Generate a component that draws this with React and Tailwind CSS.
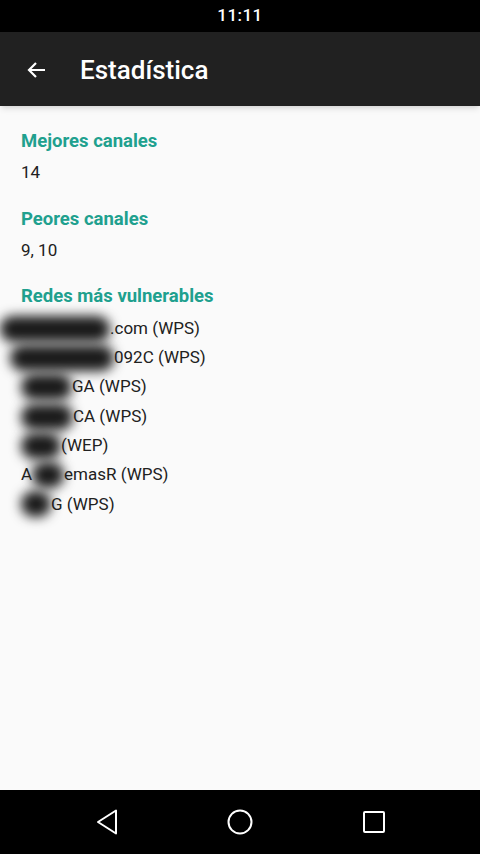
import React from 'react';

const font = { fontFamily: 'Roboto, "Noto Sans", sans-serif' };

const redes = [
  { blob: 'ml-[-21px] w-[110px]', shown: '.com (WPS)' },
  { blob: 'ml-[-11px] w-[104px]', shown: '092C (WPS)' },
  { blob: 'w-[51px]', shown: 'GA (WPS)' },
  { blob: 'w-[52px]', shown: 'CA (WPS)' },
  { blob: 'w-[40px]', shown: '(WEP)' },
  { pre: 'A', blob: 'w-[32px]', shown: 'emasR (WPS)' },
  { blob: 'w-[30px]', shown: 'G (WPS)' },
];

const Seccion = ({ title, children }) => (
  <div className="mb-[19.5px]">
    <h2 className="text-[18.5px] font-bold text-[#20a08e] leading-[24px]">{title}</h2>
    {children}
  </div>
);

const App = () => {
  return (
    <div className="w-[480px] h-[854px] flex flex-col bg-[#fafafa] text-[#212121]" style={font}>
      {/* status bar */}
      <div className="h-[32px] bg-black flex items-center justify-center">
        <span className="text-white text-[17px] font-medium tracking-wide">11:11</span>
      </div>

      {/* toolbar */}
      <div className="h-[74px] bg-[#212121] flex items-center shadow-md">
        <svg width="24" height="24" viewBox="0 0 24 24" className="ml-[25px] mt-[2px]" fill="none" stroke="white" strokeWidth="2.2">
          <path d="M20 12H4M11 5l-7 7 7 7" />
        </svg>
        <h1 className="ml-[31px] mt-[3px] text-white text-[26px] font-medium">Estadística</h1>
      </div>

      {/* content */}
      <div className="flex-1 px-[21px] pt-[23px]">
        <Seccion title="Mejores canales">
          <p className="text-[17px] leading-[30px] mt-[4px]">14</p>
        </Seccion>
        <Seccion title="Peores canales">
          <p className="text-[17px] leading-[30px] mt-[4px]">9, 10</p>
        </Seccion>
        <Seccion title="Redes más vulnerables">
          <div className="mt-[6px]">
            {redes.map((r, i) => (
              <div key={i} className="flex items-center h-[29.3px] text-[17px]">
                {r.pre && <span>{r.pre}</span>}
                <span className={`${r.blob} h-[26px] bg-[#1a1a1a] rounded-full blur-[6px] shrink-0`} />
                <span className="whitespace-nowrap">{r.shown}</span>
              </div>
            ))}
          </div>
        </Seccion>
      </div>

      {/* nav bar */}
      <div className="h-[64px] bg-black flex items-center justify-center">
        <div className="w-[291px] flex items-center justify-between">
          <svg width="24" height="26" viewBox="0 0 24 26" fill="none" stroke="white" strokeWidth="2" strokeLinejoin="round">
            <path d="M21 1.5v23L3 13z" />
          </svg>
          <svg width="26" height="26" viewBox="0 0 26 26" fill="none" stroke="white" strokeWidth="2">
            <circle cx="13" cy="13" r="11.5" />
          </svg>
          <svg width="24" height="24" viewBox="0 0 24 24" fill="none" stroke="white" strokeWidth="2" strokeLinejoin="round">
            <rect x="2" y="2" width="20" height="20" rx="1" />
          </svg>
        </div>
      </div>
    </div>
  );
};

export default App;
